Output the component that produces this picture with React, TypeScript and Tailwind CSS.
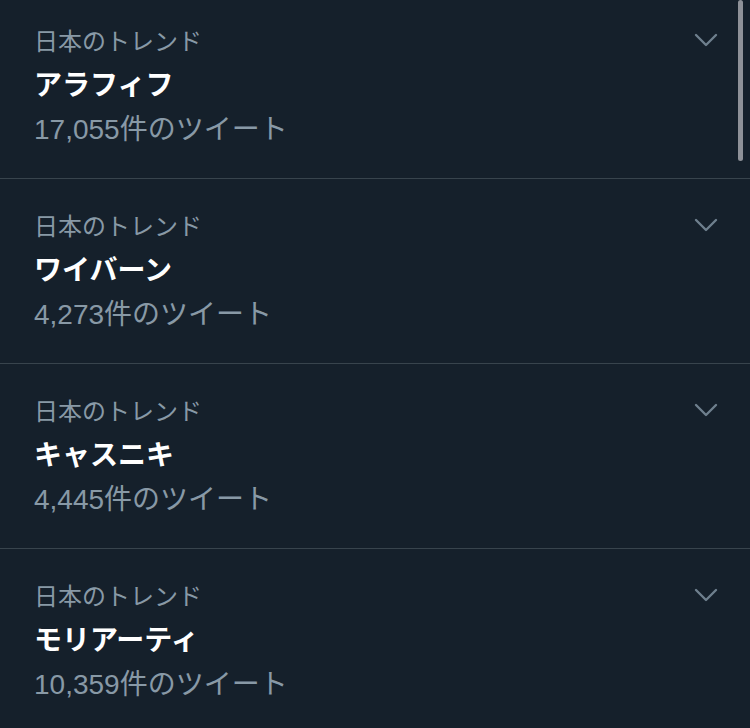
const trends = [
  { name: "アラフィフ", count: "17,055" },
  { name: "ワイバーン", count: "4,273" },
  { name: "キャスニキ", count: "4,445" },
  { name: "モリアーティ", count: "10,359" },
];

function Chevron() {
  return (
    <svg width="24" height="14" viewBox="0 0 24 14" fill="none" className="text-[#6e7f8d]">
      <path d="M2 2l10 10L22 2" stroke="currentColor" strokeWidth="2.4" strokeLinecap="round" strokeLinejoin="round" />
    </svg>
  );
}

export default function App() {
  return (
    <div
      className="relative w-[750px] h-[728px] overflow-hidden bg-[#15202b]"
      style={{ fontFamily: '"Liberation Sans", "Noto Sans CJK JP", sans-serif' }}
    >
      <div className="-mt-[6px]">
        {trends.map((t) => (
          <div key={t.name} className="flex border-b border-[#38444d] pl-[34px] pr-[32px] pt-[30px] pb-[26px]">
            <div className="flex-1 flex flex-col">
              <div className="text-[24px] leading-[36px] text-[#8899a6]">日本のトレンド</div>
              <div className="mt-[4px] text-[28px] leading-[44px] font-bold text-white">{t.name}</div>
              <div className="text-[28px] leading-[44px] text-[#8899a6]">{t.count}件のツイート</div>
            </div>
            <div className="h-[32px] flex items-center">
              <Chevron />
            </div>
          </div>
        ))}
      </div>
      <div className="absolute right-[7px] top-0 w-[5px] h-[161px] rounded-full bg-[#8e9198]" />
    </div>
  );
}
